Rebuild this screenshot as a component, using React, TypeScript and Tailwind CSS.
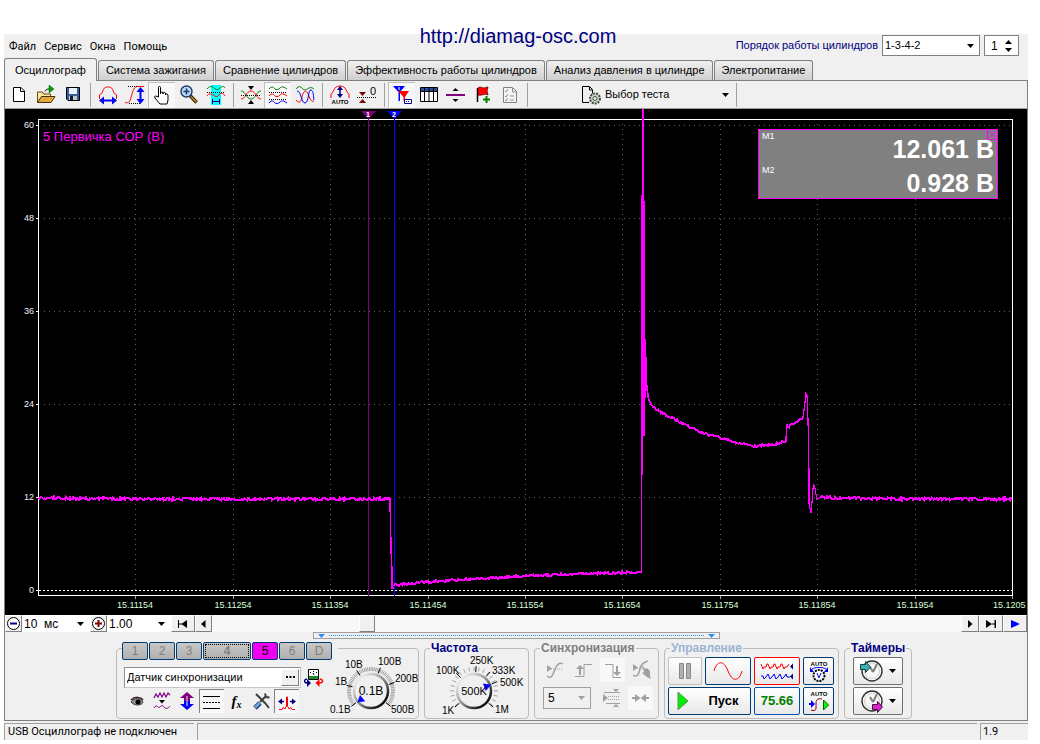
import { useState, type ReactNode } from 'react';
import clsx from 'clsx';

const TABS = [
  'Осциллограф',
  'Система зажигания',
  'Сравнение цилиндров',
  'Эффективность работы цилиндров',
  'Анализ давления в цилиндре',
  'Электропитание',
];

const CHANNELS = ['1', '2', '3', '4', '5', '6', 'D'];

const GRID_X = [135, 233, 330, 428, 525, 622, 720, 817, 915];
const X_LABELS = ['15.11154', '15.11254', '15.11354', '15.11454', '15.11554', '15.11654', '15.11754', '15.11854', '15.11954'];
const GRID_Y = [
  { y: 125, label: '60' },
  { y: 218, label: '48' },
  { y: 311, label: '36' },
  { y: 404, label: '24' },
  { y: 497, label: '12' },
  { y: 590, label: '0' },
];

// [x, y] knots of the signal, noise is added between them
const FLAT_BEFORE = [[39, 498], [150, 499], [250, 499], [391, 499]];
const CHARGE = [[394, 585], [425, 582], [470, 579], [525, 576], [580, 574], [641, 572]];
const BURN = [[652, 406], [660, 412], [680, 422], [700, 432], [720, 438], [736, 443], [753, 446], [770, 445], [780, 443], [786, 441]];
const STEP = [[788, 427], [794, 423], [800, 420], [803, 417]];
const FLAT_AFTER = [[821, 497], [835, 498], [900, 499], [1012, 499]];

function noisy(knots: number[][], amp: number) {
  let seed = knots[0][0] * 7 + 13;
  const out: string[] = [];
  for (let i = 0; i < knots.length - 1; i++) {
    const [x0, y0] = knots[i];
    const [x1, y1] = knots[i + 1];
    for (let x = x0; x < x1; x++) {
      seed = (seed * 1103515245 + 12345) % 2147483648;
      const n = (seed / 2147483648 - 0.5) * 2 * amp;
      out.push(`${x},${(y0 + ((y1 - y0) * (x - x0)) / (x1 - x0) + n).toFixed(1)}`);
    }
  }
  const last = knots[knots.length - 1];
  out.push(`${last[0]},${last[1]}`);
  return out.join(' ');
}

function Icon({ w = 20, h = 20, children }: { w?: number; h?: number; children: ReactNode }) {
  return (
    <svg width={w} height={h} viewBox={`0 0 ${w} ${h}`} fill="none" className="shrink-0" aria-hidden="true">
      {children}
    </svg>
  );
}

function Caret({ className = '' }: { className?: string }) {
  return (
    <svg width="7" height="4" viewBox="0 0 7 4" className={clsx('pointer-events-none', className)} aria-hidden="true">
      <path d="M0 0h7L3.5 4z" fill="currentColor" />
    </svg>
  );
}

function ToolButton({ label, pressed, children }: { label: string; pressed?: boolean; children: ReactNode }) {
  return (
    <button
      type="button"
      aria-label={label}
      className={clsx(
        'flex h-[26px] w-[27px] shrink-0 items-center justify-center',
        pressed && 'border-t border-l border-[#c0c0c0] bg-[#f8f8f8]',
      )}
    >
      {children}
    </button>
  );
}

function Separator() {
  return (
    <div className="flex w-2 shrink-0 justify-center">
      <div className="h-6 w-px bg-[#a0a0a0]" />
    </div>
  );
}

function Header() {
  return (
    <header className="flex h-6 items-start justify-between pt-px pr-[9px] pl-[5px]">
      <nav className="flex gap-2 pt-1 font-[Roboto,'Noto_Sans',sans-serif] text-[11px] leading-4">
        {['Файл', 'Сервис', 'Окна', 'Помощь'].map((m) => (
          <button key={m} type="button">{m}</button>
        ))}
      </nav>
      <div className="flex items-center">
        <label htmlFor="order" className="mr-1 text-[11px] text-[#000080]">Порядок работы цилиндров</label>
        <div className="relative">
          <select id="order" className="block h-[21px] w-[98px] appearance-none border border-[#808080] bg-white pl-0.5 text-[11px]">
            <option>1-3-4-2</option>
          </select>
          <Caret className="absolute top-[9px] right-[6px]" />
        </div>
        <div className="ml-1 flex h-[21px] w-[35px] items-center border border-[#808080] bg-white">
          <input aria-label="Цилиндр" defaultValue="1" className="w-[20px] pl-1.5 text-[12px] outline-none" />
          <div className="flex flex-col gap-1">
            <button type="button" aria-label="Больше">
              <Caret className="rotate-180" />
            </button>
            <button type="button" aria-label="Меньше">
              <Caret />
            </button>
          </div>
        </div>
      </div>
    </header>
  );
}

function Tabs({ active, onChange }: { active: number; onChange: (i: number) => void }) {
  return (
    <div role="tablist" className="flex h-[22px] items-end gap-px text-[11px]">
      {TABS.map((t, i) => (
        <button
          key={t}
          type="button"
          role="tab"
          aria-selected={i === active}
          onClick={() => onChange(i)}
          className={clsx(
            'rounded-t-[3px] border border-[#808080] whitespace-nowrap',
            i === active
              ? 'z-10 -mb-px h-[23px] border-b-0 bg-[#f0f0f0] px-[10px]'
              : 'h-5 border-b-0 bg-linear-to-b from-[#f0f0f0] to-[#cfcfcf] px-[7px]',
          )}
        >
          {t}
        </button>
      ))}
    </div>
  );
}

function Toolbar() {
  return (
    <div className="flex h-7 items-center border-t border-[#808080] bg-[#f0f0f0]">
      <ToolButton label="Новый">
        <Icon>
          <path d="M4.500 2.500H12L15.500 6v10.500H4.500z" fill="#fff" stroke="#000" />
          <path d="M11.500 3v3.500H15" stroke="#000" />
        </Icon>
      </ToolButton>
      <ToolButton label="Открыть">
        <Icon>
          <path d="M1.500 17V7h5l1 2h7v8z" fill="#fbe9a0" stroke="#6b4a10" />
          <path d="M1.500 17.500l4-6H19l-4 6z" fill="#e0a83c" stroke="#4a3208" />
          <path d="M9 6.500c1-2 2-2.500 4-2.500" stroke="#000" />
          <path d="M13 0v8l5-4z" fill="#00a000" stroke="#006000" strokeWidth=".5" />
        </Icon>
      </ToolButton>
      <ToolButton label="Сохранить">
        <Icon>
          <path d="M3.500 2.500h13v13H5l-1.500-1.500z" fill="#3c5a96" stroke="#000" />
          <path d="M6 3h8v6H6z" fill="#e8f0f8" />
          <path d="M6 11h8v4H6z" fill="#c0c8d0" />
          <path d="M7 11h3v4H7z" fill="#101830" />
        </Icon>
      </ToolButton>
      <Separator />
      <ToolButton label="Масштаб по времени">
        <Icon>
          <path d="M1.500 14v-4c1-2 2 0 3-3 1-5 4-5 5.500-5s4.500 0 5.500 5c1 3 2 1 3 3v4" stroke="#f00" />
          <path d="M4 15.500h12" stroke="#00f" strokeWidth="2" />
          <path d="M1 15.500l5-4v8zM19 15.500l-5-4v8z" fill="#00f" />
        </Icon>
      </ToolButton>
      <ToolButton label="Масштаб по амплитуде">
        <Icon>
          <path d="M0 17.500c4 1 5-1 6-5s3-11 6-11h7" stroke="#f00" />
          <path d="M3 1.500h10M4 18.500h11" stroke="#000" strokeDasharray="1 1" />
          <path d="M15.500 5v11" stroke="#00f" strokeWidth="2" />
          <path d="M15.500 2l4 5h-8zM15.500 19l4-5h-8z" fill="#00f" />
        </Icon>
      </ToolButton>
      <ToolButton label="Перемещение" pressed>
        <Icon>
          <path
            d="M6.500 12V2.500q0-1 1-1t1 1V9V7.500q1.500-1 2.500 0V9V8q1.500-1 2.500 0v2V9q2-.5 2.500 1v5l-1 4h-7l-5-6q-1-2 .5-2z"
            fill="#fff"
            stroke="#000"
          />
        </Icon>
      </ToolButton>
      <ToolButton label="Лупа">
        <Icon>
          <circle cx="7.500" cy="6.500" r="5.500" fill="#b8dcf8" stroke="#203868" strokeWidth="1.400" />
          <path d="M4.500 6.500h6M7.500 3.500v6" stroke="#203868" strokeWidth="1.600" />
          <path d="M11.500 11l6 6.500" stroke="#2c2008" strokeWidth="3.400" />
          <path d="M12 11.500l5 5.500" stroke="#c08820" strokeWidth="1.600" />
        </Icon>
      </ToolButton>
      <ToolButton label="Выделение">
        <Icon>
          <path d="M5 0h10v20H5z" fill="#0ff" />
          <path d="M1 4c2-3 5-3 7-1s4 2 6 0 4-2 5 0" stroke="#008000" />
          <path d="M1 7.500h18" stroke="#000" strokeDasharray="1 1" />
          <path d="M1 11c2-3 4-2 6-1s4 3 6 0 4-2 6 1" stroke="#f00" />
          <path d="M6 16.500h8M6.500 14v5M13.500 14v5" stroke="#00008b" />
        </Icon>
      </ToolButton>
      <Separator />
      <ToolButton label="Совместить">
        <Icon>
          <path d="M7 1h6l-3 4zM7 19h6l-3-4z" fill="#000" />
          <path d="M0 6c5 0 5 8 10 8s5-8 10-8" stroke="#008000" />
          <path d="M0 14c5 0 5-8 10-8s5 8 10 8" stroke="#f00" />
          <path d="M0 10.500h20" stroke="#000" strokeDasharray="1 1" />
        </Icon>
      </ToolButton>
      <ToolButton label="Раздельно" pressed>
        <Icon>
          <path d="M1 4c3-4 5-1 6 0s3 1 5-1 4-1 7 1" stroke="#008000" />
          <path d="M1 7.500h18M1 14.500h18" stroke="#000" strokeDasharray="1 1" />
          <path d="M1 11c3-4 5-1 6 0s3 1 5-1 4-1 7 1" stroke="#f00" />
          <path d="M1 18c3-4 5-1 6 0s3 1 5-1 4-1 7 1" stroke="#00f" />
        </Icon>
      </ToolButton>
      <ToolButton label="Наложение">
        <Icon>
          <path d="M1 4c3-4 5-2 7 0s4 0 6-1 4 0 5 1" stroke="#008000" />
          <path d="M1 15c3 4 5 2 6-3s3-7 5-5 3 11 7 9" stroke="#f00" />
          <path d="M2 6c4-1 4 12 8 12S13 4 16 5s2 6 3 10" stroke="#00f" />
        </Icon>
      </ToolButton>
      <Separator />
      <ToolButton label="Авто амплитуда">
        <Icon>
          <path d="M1 13V9c3-1 2-8 9-8s6 7 9 8v4" stroke="#f00" />
          <path d="M10 4v6" stroke="#00008b" strokeWidth="1.500" />
          <path d="M10 1l3 4H7zM10 13l3-4H7z" fill="#00008b" />
          <text x="10" y="19" textAnchor="middle" fontSize="6" fontWeight="700" fill="#000">AUTO</text>
        </Icon>
      </ToolButton>
      <ToolButton label="Уровень нуля">
        <Icon>
          <path d="M2 7h7L5.500 11zM2 18h7L5.500 14z" fill="#800000" />
          <path d="M0 12.500h19" stroke="#000" strokeDasharray="1 1" />
          <text x="13" y="10" fontSize="11" fill="#000">0</text>
        </Icon>
      </ToolButton>
      <Separator />
      <ToolButton label="Маркеры" pressed>
        <Icon>
          <path d="M1 1h12L8 7v9H6.500V7z" fill="#00f" />
          <path d="M6 6h11l-4 6v4h-1.500v-4z" fill="#f00" />
          <path d="M7 2v3" stroke="#fff" />
          <path d="M12.500 14.500h7v4h-7z" fill="#fff" stroke="#000080" />
          <path d="M14 16.500h4" stroke="#000080" strokeDasharray="1 1" />
        </Icon>
      </ToolButton>
      <ToolButton label="Таблица">
        <Icon>
          <path d="M1.500 2.500h17v14h-17z" fill="#fff" stroke="#000" />
          <path d="M2 3h16v3H2z" fill="#2c4c9c" />
          <path d="M2 6.500h16M5.500 3v13M10 3v13M14.500 3v13" stroke="#000" />
        </Icon>
      </ToolButton>
      <ToolButton label="Разделить">
        <Icon>
          <path d="M0 9h19v2H0z" fill="#800080" />
          <path d="M9.500 3l3 3h-6zM9.500 17l3-3h-6z" fill="#000" />
        </Icon>
      </ToolButton>
      <ToolButton label="Добавить метку">
        <Icon>
          <path d="M4.500 3v14" stroke="#000" strokeWidth="1.500" />
          <path d="M5 3c2-2 4 0 6 0l4-1-1 4 1 4c-3-2-6 1-10 0z" fill="#f00" stroke="#600000" strokeWidth=".8" />
          <path d="M13.500 11v7M10 14.500h7" stroke="#008000" strokeWidth="2" />
        </Icon>
      </ToolButton>
      <ToolButton label="Список">
        <Icon>
          <path d="M3.500 2.500h9l4 4v11h-13z" fill="#f4f4f4" stroke="#808080" />
          <path d="M12.500 3v4H16M5 6l1 1 2-3M5 11l1 1 2-3M5 15l1 1 2-3M10 11h4M10 15h4" stroke="#909090" />
        </Icon>
      </ToolButton>
      <Separator />
      <button type="button" className="ml-[48px] flex h-6 w-[158px] items-center border-r border-[#a0a0a0] pr-[7px] text-[11px]">
        <Icon w={24}>
          <path d="M10 17.500H3.500V1.500h7l3 3v4M10.500 2v3h3" stroke="#000" />
          <circle cx="16" cy="13.500" r="5" fill="#c8d4c8" stroke="#405040" strokeWidth="2" strokeDasharray="2 1" />
          <circle cx="16" cy="13.500" r="2" fill="#f0f0f0" stroke="#405040" />
        </Icon>
        <span className="ml-0.5">Выбор теста</span>
        <Caret className="ml-auto" />
      </button>
    </div>
  );
}

function Chart() {
  return (
    <div className="relative bg-black">
      <svg
        viewBox="5 109 1022 506"
        className="block h-auto w-full font-['Liberation_Sans',Arial,sans-serif]"
        role="img"
        aria-label="Осциллограмма"
      >
        <g stroke="#606060" strokeDasharray="1 4" shapeRendering="crispEdges">
          {GRID_X.map((x) => (
            <path key={x} d={`M${x}.5 124V594`} />
          ))}
          {GRID_Y.slice(0, 5).map(({ y }) => (
            <path key={y} d={`M44 ${y}.5H1012`} />
          ))}
        </g>
        <path d="M39 590.5H1012" stroke="#fff" strokeDasharray="2 2" shapeRendering="crispEdges" />
        <path d="M38.500 119.500H1012.500V595.500H38.500z" fill="none" stroke="#fff" shapeRendering="crispEdges" />
        <g fontSize="9" fill="#f0f0ff">
          {GRID_Y.map(({ y, label }) => (
            <g key={y}>
              <text x="34" y={y + 3} textAnchor="end">{label}</text>
              <path d={`M36 ${y}.5h2`} stroke="#fff" />
            </g>
          ))}
        </g>
        <g fontSize="9" fill="#d8ffd8">
          {GRID_X.map((x, i) => (
            <g key={x}>
              <path d={`M${x}.5 596v3`} stroke="#a0a0a0" />
              <text x={x} y="608" textAnchor="middle">{X_LABELS[i]}</text>
            </g>
          ))}
          <path d="M1012.500 596v3" stroke="#a0a0a0" />
          <text x="993" y="608">15.1205</text>
        </g>

        <g shapeRendering="crispEdges">
          <path d="M368.500 112V596" stroke="#800080" />
          <path d="M394.500 112V596" stroke="#00f" />
        </g>
        <path d="M361 111h15l-7.500 8z" fill="#800080" />
        <path d="M387 111h15l-7.500 8z" fill="#00f" />
        <g fontSize="7" fontWeight="700" fill="#fff" textAnchor="middle">
          <text x="368" y="117">1</text>
          <text x="394" y="117">2</text>
        </g>

        <g fill="none" stroke="#f0f" strokeWidth="2" shapeRendering="crispEdges">
          <polyline points={noisy(FLAT_BEFORE, 1.4)} />
          <polyline points="390,499 391,548 392,572 392,588 394,588" strokeWidth="1.500" />
          <polyline points={noisy(CHARGE, 1.2)} />
          <polyline points={noisy(BURN, 1.2)} />
          <polyline points="786,441 787,424 788,427" strokeWidth="1.500" />
          <polyline points={noisy(STEP, 1)} />
          <polyline
            points="803,417 804,410 805,402 806,393 807,395 808,420 809,472 809,503 811,513 812,502 813,489 814,485 815,488 816,494 817,499 819,498 821,496"
            strokeWidth="1.200"
          />
          <polyline points={noisy(FLAT_AFTER, 1.4)} />
          <polyline points="646,385 648,394 649,400 652,406" strokeWidth="1.500" />
        </g>
        <path
          d="M642 109H644V201H645V339H646V357H647V385H648V398H647V386H646V398H645V436H643V475H642V573H641V195H642z"
          fill="#f0f"
          shapeRendering="crispEdges"
        />
        <text x="43" y="141" fontSize="13" fill="#f0f">5 Первичка СОР (В)</text>
      </svg>

      <div className="absolute top-[20px] right-[29px] h-[70px] w-[240px] border border-[#ff00ff] bg-[#808080] text-white">
        {[['M1', '12.061 В'], ['M2', '0.928 В']].map(([name, value]) => (
          <div key={name} className="flex h-[34px] justify-between px-[3px]">
            <span className="pt-px text-[9px] leading-[11px]">{name}</span>
            <span className="pt-[3px] text-[25px] leading-8 font-bold">{value}</span>
          </div>
        ))}
        <button type="button" aria-label="Закрыть" className="absolute top-0 right-0 border-b border-l border-[#ff00ff]">
          <Icon w={9} h={9}>
            <path d="M1 1l7 7M8 1L1 8" stroke="#f0f" />
          </Icon>
        </button>
      </div>
    </div>
  );
}

const raised = 'flex h-[17px] items-center justify-center border border-[#fff] border-r-[#808080] border-b-[#808080] bg-[#f0f0f0]';

function ScrollRow() {
  return (
    <div className="flex h-[17px] items-center bg-[#f8f8f8] text-[12px]">
      <button type="button" aria-label="Уменьшить" className={clsx(raised, 'w-[17px]')}>
        <Icon w={15} h={15}>
          <circle cx="7.500" cy="7.500" r="6" fill="#fff" stroke="#000" />
          <path d="M4 7.500h7" stroke="#000080" strokeWidth="2" />
        </Icon>
      </button>
      <div className="relative">
        <select aria-label="Развертка" className="block h-[17px] w-[68px] appearance-none bg-white pl-0.5">
          <option>10{'\u00a0\u00a0'}мс</option>
        </select>
        <Caret className="absolute top-[7px] right-[6px]" />
      </div>
      <button type="button" aria-label="Увеличить" className={clsx(raised, 'w-[17px]')}>
        <Icon w={15} h={15}>
          <circle cx="7.500" cy="7.500" r="6" fill="#fff" stroke="#000" />
          <path d="M4 7.500h7M7.500 4v7" stroke="#800000" strokeWidth="2" />
        </Icon>
      </button>
      <div className="relative">
        <select aria-label="Масштаб" className="block h-[17px] w-[64px] appearance-none bg-white pl-0.5">
          <option>1.00</option>
        </select>
        <Caret className="absolute top-[7px] right-[6px]" />
      </div>
      <button type="button" aria-label="В начало" className={clsx(raised, 'w-6')}>
        <Icon w={12} h={8}>
          <path d="M1.500 0v8" stroke="#000" />
          <path d="M2 3.500h3L10 0v8L5 4.500H2z" fill="#000" />
        </Icon>
      </button>
      <button type="button" aria-label="Назад" className={clsx(raised, 'w-[17px]')}>
        <Icon w={5} h={8}>
          <path d="M4.500 0v8L0 4z" fill="#000" />
        </Icon>
      </button>
      <div className="flex h-full grow bg-[#f8f8f8] pl-[147px]">
        <div className={clsx(raised, 'w-4')} />
      </div>
      <button type="button" aria-label="Вперед" className={clsx(raised, 'w-[18px]')}>
        <Icon w={5} h={8}>
          <path d="M0 0v8l4.500-4z" fill="#000" />
        </Icon>
      </button>
      <button type="button" aria-label="В конец" className={clsx(raised, 'w-6')}>
        <Icon w={12} h={8}>
          <path d="M1 0l6 4-6 4zM7 3.500h3v1H7zM9.500 0H11v8H9.500z" fill="#000" />
        </Icon>
      </button>
      <button type="button" aria-label="Следить" className={clsx(raised, 'w-6')}>
        <Icon w={9} h={8}>
          <path d="M0 0l9 4-9 4z" fill="#00f" />
        </Icon>
      </button>
    </div>
  );
}

function Splitter() {
  return (
    <div className="mx-auto flex h-[7px] w-[407px] items-center gap-1 border border-[#a0a0a0] px-1 text-[#3090f0]">
      <Caret />
      <div className="grow border-t border-dotted border-[#3090f0]" />
      <Caret />
    </div>
  );
}

function Group({ title, color, className, children }: { title: ReactNode; color?: string; className?: string; children: ReactNode }) {
  return (
    <fieldset className={clsx('h-[77px] shrink-0 rounded-[4px] border border-[#bcbcbc]', className)}>
      <legend className={clsx('ml-[5px] h-3 px-px text-[12px] leading-3 font-bold', color)}>{title}</legend>
      {children}
    </fieldset>
  );
}

interface KnobProps {
  cx: number;
  cy: number;
  r: number;
  value: string;
  pointer: number;
  marks: { label: string; x: number; y: number; deg: number }[];
  w: number;
  dense?: boolean;
}

function Knob({ cx, cy, r, value, pointer, marks, w, dense }: KnobProps) {
  const id = `knob-${w}`;
  const ticks = dense ? 60 : 20;
  const polar = (deg: number, rad: number) => [
    cx + rad * Math.sin((deg * Math.PI) / 180),
    cy - rad * Math.cos((deg * Math.PI) / 180),
  ];
  const line = (deg: number, a: number, b: number) => {
    const [x0, y0] = polar(deg, a);
    const [x1, y1] = polar(deg, b);
    return `M${x0.toFixed(2)} ${y0.toFixed(2)}L${x1.toFixed(2)} ${y1.toFixed(2)}`;
  };
  const [px, py] = polar(pointer, r - 4);
  return (
    <label className="relative block">
      <svg width={w} height="64" viewBox={`0 0 ${w} 64`} className="block font-['Liberation_Sans',Arial,sans-serif]" aria-hidden="true">
        <defs>
          <linearGradient id={id} x1="0" y1="0" x2="1" y2="1">
            <stop offset=".1" stopColor="#f4f4f4" />
            <stop offset=".5" stopColor="#909090" />
            <stop offset=".85" stopColor="#101010" />
          </linearGradient>
        </defs>
        {Array.from({ length: ticks + 1 }, (_, i) => -128 + (256 * i) / ticks).map((d) => (
          <path key={d} d={line(d, r + 2, r + 6)} stroke="#a0a0a0" strokeWidth="1" />
        ))}
        {marks.map((m) => (
          <g key={m.label}>
            <path d={line(m.deg, r + 1, r + 7)} stroke="#000" />
            <text x={m.x} y={m.y} fontSize="10" fill="#000">{m.label}</text>
          </g>
        ))}
        <circle cx={cx} cy={cy} r={r - 1} fill="#f0f0f0" stroke={`url(#${id})`} strokeWidth="2.500" />
        <path
          d="M0-4l4 7h-8z"
          fill="#00f"
          transform={`translate(${px.toFixed(1)} ${py.toFixed(1)}) rotate(${pointer})`}
        />
        <text x={cx} y={cy + 4} fontSize={dense ? 12 : 11} textAnchor="middle" fill="#000">{value}</text>
      </svg>
      <input type="range" aria-label={value} className="absolute inset-0 h-full w-full opacity-0" />
    </label>
  );
}

function SmallButton({ label, pressed, children }: { label: string; pressed?: boolean; children: ReactNode }) {
  return (
    <button
      type="button"
      aria-label={label}
      className={clsx(
        'flex h-6 w-[25px] items-center justify-center',
        pressed && 'border-t border-l border-[#808080] bg-[#f8f8f8]',
      )}
    >
      {children}
    </button>
  );
}

function ChannelGroup() {
  const channels = (
    <div className="flex gap-px font-normal">
      {CHANNELS.map((c) => (
        <button
          key={c}
          type="button"
          className={clsx(
            'h-[18px] rounded-[2px] border border-[#003c74] text-[12px] leading-4',
            c === '4' ? 'w-12' : 'w-[26px]',
            c === '5' ? 'bg-[#f000f0] text-black' : 'bg-linear-to-b from-[#c8c8c8] to-[#b0b0b0] text-[#808080]',
            c === '4' && 'font-bold outline-1 -outline-offset-3 outline-dotted outline-black',
          )}
        >
          {c}
        </button>
      ))}
    </div>
  );
  return (
    <fieldset className="h-[77px] w-[303px] shrink-0 rounded-[4px] border border-[#bcbcbc]">
      <legend className="ml-[5px] h-3 bg-[#f0f0f0] pr-[6px]">{channels}</legend>
      <div className="flex justify-between">
        <div className="pt-[13px] pl-[7px]">
          <div className="flex items-center gap-[3px]">
            <div className="flex h-[21px] w-[177px] items-center border border-[#c8c8c8] border-t-[#909090] border-l-[#909090] bg-white pr-px">
              <input aria-label="Название канала" defaultValue="Датчик синхронизации" className="min-w-0 grow pl-0.5 text-[11px] outline-none" />
              <button type="button" aria-label="Выбрать" className={clsx(raised, 'w-[18px]')}>
                <Icon w={9} h={3}>
                  <path d="M0 0h2v2H0zM3.500 0h2v2h-2zM7 0h2v2H7z" fill="#000" />
                </Icon>
              </button>
            </div>
            <button type="button" aria-label="Переключить">
              <Icon>
                <path d="M4.500 1.500h10v10h-10z" fill="#fff" stroke="#000" />
                <path d="M5 8h9v3H5z" fill="#208830" />
                <path d="M6 4l1 1M9.500 3v1M13 4l-1 1M10 7l-1-2" stroke="#000" />
                <path d="M3 11c-4 1-3 4 1 4" stroke="#000080" strokeWidth="1.500" />
                <path d="M3 11l4 4-4 4z" fill="#000080" />
                <path d="M16 11c4 1 3 4-1 4" stroke="#f00" strokeWidth="1.500" />
                <path d="M15.500 11l-4 4 4 4z" fill="#f00" />
              </Icon>
            </button>
          </div>
          <div className="mt-px flex">
            <SmallButton label="Видимость">
              <Icon w={16}>
                <path d="M2 11c3-5 10-4 12 0-1 4-9 4-12 0z" fill="#909090" stroke="#404040" />
                <circle cx="9" cy="11" r="2.500" fill="#000" />
                <path d="M2 9c4-4 10-3 12 0" stroke="#402020" strokeWidth="1.500" />
              </Icon>
            </SmallButton>
            <SmallButton label="Фильтр">
              <Icon>
                <path d="M2 7l2-4 2 3 2-4 2 4 2-4 2 4 2-4 2 2" stroke="#800080" strokeWidth="1.200" />
                <path d="M7 9h6l-3 3.500z" fill="#000" />
                <path d="M2 17c3-5 4 1 6-1s3-2 4 0 4 2 6-1" stroke="#800080" />
              </Icon>
            </SmallButton>
            <SmallButton label="Инверсия">
              <Icon>
                <path d="M10 1l7 6h-4v3H7V7H3z" fill="#800080" />
                <path d="M10 19l7-6h-4v-3H7v3H3z" fill="#00f" />
                <path d="M10 5v10" stroke="#f0f0f0" />
              </Icon>
            </SmallButton>
            <SmallButton label="Линии" pressed>
              <Icon>
                <path d="M1 4.500h17M1 16.500h17" stroke="#000" />
                <path d="M1 10.500h17" stroke="#000" strokeDasharray="2 1" />
              </Icon>
            </SmallButton>
            <SmallButton label="Функция">
              <span className="font-['Liberation_Serif',serif] text-[15px] leading-none font-bold italic">
                f<sub className="text-[10px]">x</sub>
              </span>
            </SmallButton>
            <SmallButton label="Настройки">
              <Icon>
                <path d="M4 3l9 9 4 5" stroke="#404040" strokeWidth="2" />
                <path d="M3 17l5-5" stroke="#284878" strokeWidth="5" />
                <path d="M3 16.500l4.500-4.500" stroke="#70a0d8" strokeWidth="2.500" />
                <path d="M8 11l6-6M13 2.500l1 3.500 3.500.5" stroke="#404040" strokeWidth="2" />
              </Icon>
            </SmallButton>
            <SmallButton label="Импульс" pressed>
              <Icon w={18}>
                <path d="M1 17.500h3l1-2 2 1.500 1.500-3V5h1v9l1.500 3 2-1.500 1 2h3" stroke="#f00" />
                <path d="M2 9.500h4M12 9.500h4" stroke="#000080" strokeWidth="1.500" />
                <path d="M0 9.500l4-3v6zM18 9.500l-4-3v6z" fill="#000080" />
              </Icon>
            </SmallButton>
          </div>
        </div>
        <Knob
          w={92}
          cx={45}
          cy={37}
          r={18}
          value="0.1В"
          pointer={-130}
          dense
          marks={[
            { label: '0.1В', x: 4, y: 59, deg: -128 },
            { label: '1В', x: 9, y: 31, deg: -77 },
            { label: '10В', x: 19, y: 14, deg: -35 },
            { label: '100В', x: 52, y: 11, deg: 22 },
            { label: '200В', x: 69, y: 28, deg: 70 },
            { label: '500В', x: 65, y: 59, deg: 128 },
          ]}
        />
      </div>
    </fieldset>
  );
}

function FrequencyGroup() {
  return (
    <Group title="Частота" color="text-[#000080]" className="w-[105px]">
      <Knob
        w={102}
        cx={49}
        cy={37}
        r={18}
        value="500K"
        pointer={70}
        marks={[
          { label: '1K', x: 17, y: 60, deg: -130 },
          { label: '100K', x: 11, y: 20, deg: -45 },
          { label: '250K', x: 45, y: 10, deg: 5 },
          { label: '333K', x: 67, y: 20, deg: 40 },
          { label: '500K', x: 75, y: 32, deg: 68 },
          { label: '1M', x: 70, y: 59, deg: 130 },
        ]}
      />
    </Group>
  );
}

function SyncGroup() {
  return (
    <Group title="Синхронизация" color="text-[#808080]" className="w-[125px]">
      <div className="flex gap-1 pt-1 pl-[7px] text-[#a0a0a0]">
        <SmallButton label="Синхронизация по уровню">
          <Icon>
            <path d="M2 5l5 3.500L2 12z" fill="currentColor" />
            <path d="M6 9h12" stroke="currentColor" strokeDasharray="1 1" />
            <path d="M2 16c5 4 6-2 8-7s5-7 8-5" stroke="currentColor" strokeWidth="1.500" />
          </Icon>
        </SmallButton>
        <SmallButton label="По фронту">
          <Icon>
            <path d="M1 16.500h9V4.500h8" stroke="currentColor" />
            <path d="M6 15V8" stroke="currentColor" strokeWidth="2" />
            <path d="M2 9l4-4 4 4z" fill="currentColor" />
          </Icon>
        </SmallButton>
        <div className="bg-[#f8f8f8]">
          <SmallButton label="По спаду">
            <Icon>
              <path d="M2 4.500h8v13h8" stroke="currentColor" />
              <path d="M14 6v7" stroke="currentColor" strokeWidth="2" />
              <path d="M10 12l4 4 4-4z" fill="currentColor" />
            </Icon>
          </SmallButton>
        </div>
        <SmallButton label="Вручную">
          <Icon>
            <path d="M1 4l5 3.500L1 11z" fill="currentColor" />
            <path d="M5 8h6" stroke="currentColor" strokeDasharray="1 1" />
            <path d="M1 15c4 3 6-1 7-6s4-7 8-8" stroke="currentColor" strokeWidth="1.500" />
            <path d="M10 6h1l2 3 2-1 3 3v5l1 3-4-2-5-4 2-1z" fill="currentColor" />
          </Icon>
        </SmallButton>
      </div>
      <div className="mt-1 flex items-center pl-2 text-[#a0a0a0]">
        <div className="relative">
          <select aria-label="Канал синхронизации" className="block h-[22px] w-[48px] appearance-none border border-[#a0a0a0] pl-1 text-[12px] text-black">
            <option>5</option>
          </select>
          <Caret className="absolute top-[9px] right-[6px]" />
        </div>
        <div className="ml-2 flex gap-1">
          <SmallButton label="Границы">
            <Icon>
              <path d="M1 6l5 4-5 4z" fill="currentColor" />
              <path d="M2 4.500h16M4 15.500h14" stroke="currentColor" />
              <path d="M6 8.500h12M6 11.500h12" stroke="currentColor" strokeDasharray="1 1" />
              <path d="M11 1h6l-3 3zM11 19h6l-3-3z" fill="currentColor" />
            </Icon>
          </SmallButton>
          <div className="bg-[#f8f8f8]">
            <SmallButton label="Центр">
              <Icon>
                <path d="M1 10h5M13 10h5" stroke="currentColor" strokeWidth="2" />
                <path d="M4 6l5.500 4L4 14zM15 6l-5.500 4 5.500 4z" fill="currentColor" />
              </Icon>
            </SmallButton>
          </div>
        </div>
      </div>
    </Group>
  );
}

const xpButton = 'flex h-7 items-center justify-center rounded-[2px] border bg-linear-to-b from-white to-[#e8e8e8]';

function ControlGroup() {
  return (
    <Group title="Управление" color="text-[#9cb4d0]" className="w-[175px]">
      <div className="grid grid-cols-[34px_46px_46px_31px] gap-x-[3px] gap-y-0.5 pt-[3px] pl-[3px]">
        <button type="button" disabled aria-label="Пауза" className={clsx(xpButton, 'border-[#c0c0c0]')}>
          <Icon w={12} h={16}>
            <path d="M.5.500h4v15h-4zM7.500.500h4v15h-4z" fill="#b0b0b0" stroke="#888" />
          </Icon>
        </button>
        <button type="button" aria-label="Сигнал" className={clsx(xpButton, 'border-[#003c74]')}>
          <Icon w={30}>
            <path d="M1 10C4-1 11-1 15 10s11 11 14 0" stroke="#f00" />
          </Icon>
        </button>
        <button type="button" aria-label="Каналы" className={clsx(xpButton, 'border-[#ff0000]')}>
          <Icon w={34}>
            <path
              d="M1 3l2 5 1-2h2l1-3 1 0 2 5 1-2h2l1-3h1l2 5 1-2h2l1-3h1l2 5 1-2h2l2-3"
              stroke="#f00"
            />
            <path
              d="M1 15h2l1 3 2-2 2-3 2 5 2-2 2-3 2 5 2-2 2-3 2 5 2-2 2-3 1 3h3"
              stroke="#00f"
            />
            <path d="M33 2.500v6l-3-3zM33 12.500v6l-3-3z" fill="#000080" />
          </Icon>
        </button>
        <button type="button" aria-label="Авто диапазон" className={clsx(xpButton, 'border-[#003c74]')}>
          <Icon w={22} h={24}>
            <text x="11" y="7" textAnchor="middle" fontSize="6" fontWeight="700" fill="#000">AUTO</text>
            <path d="M4 10c3-2 11-2 14 0" stroke="#00f" />
            <path d="M2 8v5h4zM20 8v5h-4z" fill="#00f" />
            <circle cx="11" cy="16.500" r="5.500" fill="#fff" stroke="#000" strokeWidth="2" strokeDasharray="2 1" />
            <path d="M9 14l2 5 2-5" stroke="#00f" />
          </Icon>
        </button>
        <button type="button" className={clsx(xpButton, 'col-span-2 border-[#003c74] pr-1 text-[13px] font-bold')}>
          <Icon w={12}>
            <path d="M1 1l10 9-10 9z" fill="#00f000" stroke="#609060" />
          </Icon>
          <span className="ml-5">Пуск</span>
        </button>
        <button type="button" className={clsx(xpButton, 'border-[#0050b0] text-[13px] font-bold text-[#008000]')}>75.66</button>
        <button type="button" aria-label="Авто пуск" className={clsx(xpButton, 'border-[#003c74]')}>
          <Icon w={22} h={24}>
            <text x="11" y="7" textAnchor="middle" fontSize="6" fontWeight="700" fill="#000">AUTO</text>
            <path d="M1 15h3" stroke="#00f" strokeWidth="2" />
            <path d="M3 11l4 4-4 4z" fill="#00f" />
            <path d="M3 21c6 2 5-2 5-6s1-6 6-5" stroke="#800000" />
            <path d="M15.500 11v10l5-5z" fill="#0f0" stroke="#006000" />
          </Icon>
        </button>
      </div>
    </Group>
  );
}

function TimerButton({ label, children }: { label: string; children: ReactNode }) {
  return (
    <button type="button" aria-label={label} className={clsx(xpButton, 'w-[50px] gap-1 border-[#707070]')}>
      <Icon w={25} h={24}>
        <circle cx="12" cy="12" r="10" fill="#f8f8f8" stroke="#303030" strokeWidth="1.400" />
        <circle cx="12" cy="12" r="7.500" stroke="#d0d0d0" />
        <path d="M13 13l-3-5M13 13l4-8" stroke="#808080" strokeWidth="2" />
        {children}
      </Icon>
      <Caret />
    </button>
  );
}

function TimersGroup() {
  return (
    <Group title="Таймеры" color="text-[#000080]" className="w-[68px]">
      <div className="flex flex-col gap-0.5 pt-[3px] pl-2">
        <TimerButton label="Таймер пуска">
          <path d="M.5 5.500h5v-3l5 5.500-5 5.500v-3h-5z" fill="#40b0b0" stroke="#104040" />
        </TimerButton>
        <TimerButton label="Таймер остановки">
          <path d="M12.500 15.500h5v-3l5 5.500-5 5.500v-3h-5z" fill="#e020d0" stroke="#401040" />
        </TimerButton>
      </div>
    </Group>
  );
}

function StatusBar() {
  return (
    <footer className="flex gap-[3px] pt-[2px] font-[Roboto,'Noto_Sans',sans-serif] text-[11px] leading-4">
      <div className="w-[190px] border-t border-l border-[#a0a0a0] pl-[3px] whitespace-nowrap">USB Осциллограф не подключен</div>
      <div className="grow border-t border-l border-[#a0a0a0]" />
      <div className="w-12 border-t border-l border-[#a0a0a0] pl-0.5">1.9</div>
    </footer>
  );
}

export default function App() {
  const [tab, setTab] = useState(0);

  return (
    <div className="min-h-screen bg-white pt-[34px] pr-3 pl-1 font-['Liberation_Sans',Arial,sans-serif] text-black">
      <div className="relative bg-[#f0f0f0]">
        <a href="http://diamag-osc.com" className="absolute inset-x-0 -top-[10px] mx-auto w-fit pl-1 text-[20px] leading-6 text-[#000080]">
          http://diamag-osc.com
        </a>
        <Header />
        <Tabs active={tab} onChange={setTab} />
        <main className="border-r border-b border-l border-[#808080]">
          <Toolbar />
          <div className="border-t border-[#a0a0a0]">
            <Chart />
          </div>
          <ScrollRow />
          <Splitter />
          <div className="flex justify-center gap-[5px] pt-[3px] pr-1 pb-px">
            <ChannelGroup />
            <FrequencyGroup />
            <SyncGroup />
            <ControlGroup />
            <TimersGroup />
          </div>
        </main>
        <StatusBar />
      </div>
    </div>
  );
}
